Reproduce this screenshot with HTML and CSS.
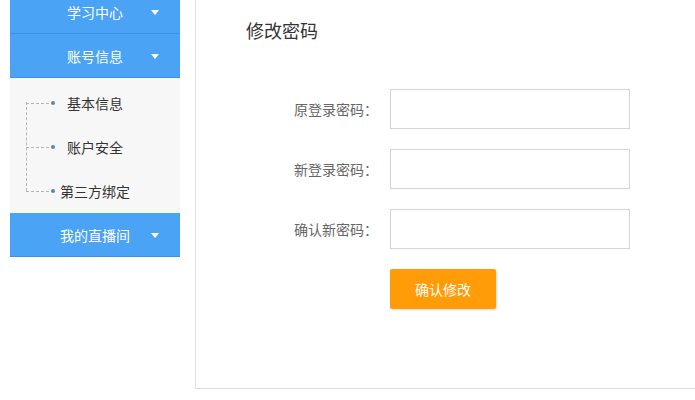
FILE: index.html
```html
<!DOCTYPE html>
<html lang="zh-CN">
<head>
    <meta charset="UTF-8">
    <meta name="viewport" content="width=device-width, initial-scale=1.0">
    <title>修改密码</title>
    <link rel="stylesheet" href="styles.css">
</head>
<body>
    <div class="page">
        <div class="side">
            <div class="nav first">学习中心<i class="arrow"></i></div>
            <div class="nav">账号信息<i class="arrow"></i></div>
            <ul class="sub">
                <li><span class="dash"></span><span class="dot"></span><span class="txt">基本信息</span></li>
                <li><span class="dash"></span><span class="dot"></span><span class="txt">账户安全</span></li>
                <li class="last"><span class="dash"></span><span class="dot"></span><span class="txt">第三方绑定</span></li>
            </ul>
            <div class="nav">我的直播间<i class="arrow"></i></div>
        </div>

        <div class="main">
            <h2 class="title">修改密码</h2>
            <form class="form">
                <div class="row">
                    <label>原登录密码：</label>
                    <input type="password">
                </div>
                <div class="row">
                    <label>新登录密码：</label>
                    <input type="password">
                </div>
                <div class="row">
                    <label>确认新密码：</label>
                    <input type="password">
                </div>
                <button class="submit" type="button">确认修改</button>
            </form>
        </div>
    </div>
</body>
</html>
```

FILE: styles.css
```css
* {
    box-sizing: border-box;
}

body {
    margin: 0;
    background-color: #fff;
    font-family: "Noto Sans CJK SC", "Noto Sans", sans-serif;
    font-size: 14px;
    color: #333;
}

.page {
    display: flex;
    align-items: flex-start;
}

.side {
    margin-left: 10px;
    width: 170px;
}

.nav {
    position: relative;
    height: 44px;
    background-color: #4ba3f6;
    color: #fff;
    text-align: center;
    line-height: 44px;
    border-bottom: 1px solid #3d8fe0;
}

.nav.first {
    margin-top: -10px;
}

.arrow {
    position: absolute;
    right: 21px;
    top: 20px;
    width: 0;
    height: 0;
    border-left: 4px solid transparent;
    border-right: 4px solid transparent;
    border-top: 5px solid #fff;
}

.sub {
    position: relative;
    margin: 0;
    padding: 3px 0 0;
    list-style: none;
    background-color: #f7f7f7;
    height: 135px;
}

/* 竖着的虚线 */
.sub::before {
    content: "";
    position: absolute;
    left: 16px;
    top: 24px;
    height: 89px;
    border-left: 1px dashed #b5b5b5;
}

.sub li {
    display: flex;
    align-items: center;
    height: 44px;
    padding-left: 16px;
    color: #333;
}

.dash {
    width: 23px;
    border-top: 1px dashed #b5b5b5;
}

.dot {
    margin-left: 2px;
    width: 4px;
    height: 4px;
    border-radius: 50%;
    background-color: #5b86ad;
}

.txt {
    margin-left: 12px;
}

.sub li.last .txt {
    margin-left: 5px;
}

.main {
    flex: 1;
    margin-left: 15px;
    height: 389px;
    border-left: 1px solid #e2e2e2;
    border-bottom: 1px solid #dcdcdc;
    padding: 18px 0 0 50px;
}

.title {
    margin: 0;
    font-size: 18px;
    font-weight: normal;
    line-height: 24px;
    color: #333;
}

.form {
    margin-top: 47px;
    margin-left: -50px;
}

.row {
    display: flex;
    align-items: center;
    margin-bottom: 20px;
}

.row label {
    width: 182px;
    text-align: right;
    color: #666;
    font-size: 14px;
}

.row input {
    margin-left: 12px;
    width: 240px;
    height: 40px;
    border: 1px solid #d4d4d4;
    outline: none;
    padding: 0 8px;
}

.submit {
    margin-left: 194px;
    width: 106px;
    height: 40px;
    border: none;
    border-radius: 2px;
    background-color: #ff9c07;
    color: #fff;
    font-family: inherit;
    font-size: 14px;
    box-shadow: 1px 1px 2px rgba(0, 0, 0, 0.15);
}
```
